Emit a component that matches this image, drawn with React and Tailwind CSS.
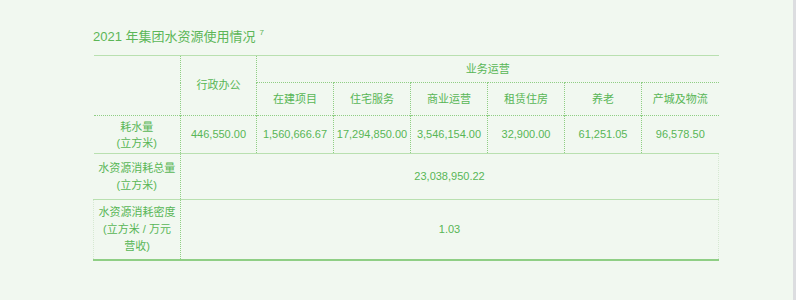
import React from 'react';

const cols = ['在建项目', '住宅服务', '商业运营', '租赁住房', '养老', '产城及物流'];
const values = ['1,560,666.67', '17,294,850.00', '3,546,154.00', '32,900.00', '61,251.05', '96,578.50'];

function App() {
  const font = { fontFamily: '"Liberation Sans", "Noto Sans CJK SC", sans-serif' };
  return (
    <div className="w-[796px] h-[300px] bg-[#dcdde0] flex" style={font}>
      <div className="w-[793px] h-full bg-[#f1f8f0] pt-[28px] pl-[93px] text-[#58b656]">
        <div className="h-[18px] text-[13px] leading-[18px] text-[#5cb657] flex items-start">
          2021 年集团水资源使用情况
          <span className="text-[8px] leading-none ml-[4px] mt-[1px]">7</span>
        </div>
        <table className="mt-[9px] w-[625px] border-collapse text-[11px] table-fixed">
          <colgroup>
            <col className="w-[87px]" />
            <col className="w-[76px]" />
            {cols.map((c) => (
              <col key={c} className="w-[77px]" />
            ))}
          </colgroup>
          <tbody>
            <tr className="h-[27px] border-t border-[#b9e0b0]">
              <td rowSpan={2} className="border-r border-dotted border-r-[#8fce84]"></td>
              <td rowSpan={2} className="text-center border-r border-dotted border-r-[#8fce84]">行政办公</td>
              <td colSpan={6} className="text-center border-b border-dotted border-b-[#8fce84]">业务运营</td>
            </tr>
            <tr className="h-[33px]">
              {cols.map((c, i) => (
                <td
                  key={c}
                  className={
                    'text-center ' + (i < cols.length - 1 ? 'border-r border-dotted border-r-[#8fce84]' : '')
                  }
                >
                  {c}
                </td>
              ))}
            </tr>
            <tr className="h-[38px] border-t border-dotted border-t-[#8fce84]">
              <td className="text-center leading-[16px] border-r border-dotted border-r-[#8fce84]">
                耗水量
                <br />
                (立方米)
              </td>
              <td className="text-center border-r border-dotted border-r-[#8fce84]">446,550.00</td>
              {values.map((v, i) => (
                <td
                  key={v}
                  className={
                    'text-center ' + (i < values.length - 1 ? 'border-r border-dotted border-r-[#8fce84]' : '')
                  }
                >
                  {v}
                </td>
              ))}
            </tr>
            <tr className="h-[46px] border-t border-[#b9e0b0]">
              <td className="text-center leading-[17px] border-r border-dotted border-r-[#8fce84]">
                水资源消耗总量
                <br />
                (立方米)
              </td>
              <td colSpan={7} className="text-center border-r border-dotted border-r-[#d6e8d2]">
                23,038,950.22
              </td>
            </tr>
            <tr className="h-[60px] border-t border-[#b9e0b0] border-b-2 border-b-[#8fcf85]">
              <td className="text-center leading-[17px] border-l border-dotted border-l-[#d6e8d2] border-r border-r-[#8fce84]">
                水资源消耗密度
                <br />
                (立方米 / 万元
                <br />
                营收)
              </td>
              <td colSpan={7} className="text-center border-r border-dotted border-r-[#d6e8d2]">
                1.03
              </td>
            </tr>
          </tbody>
        </table>
      </div>
    </div>
  );
}

export default App;
